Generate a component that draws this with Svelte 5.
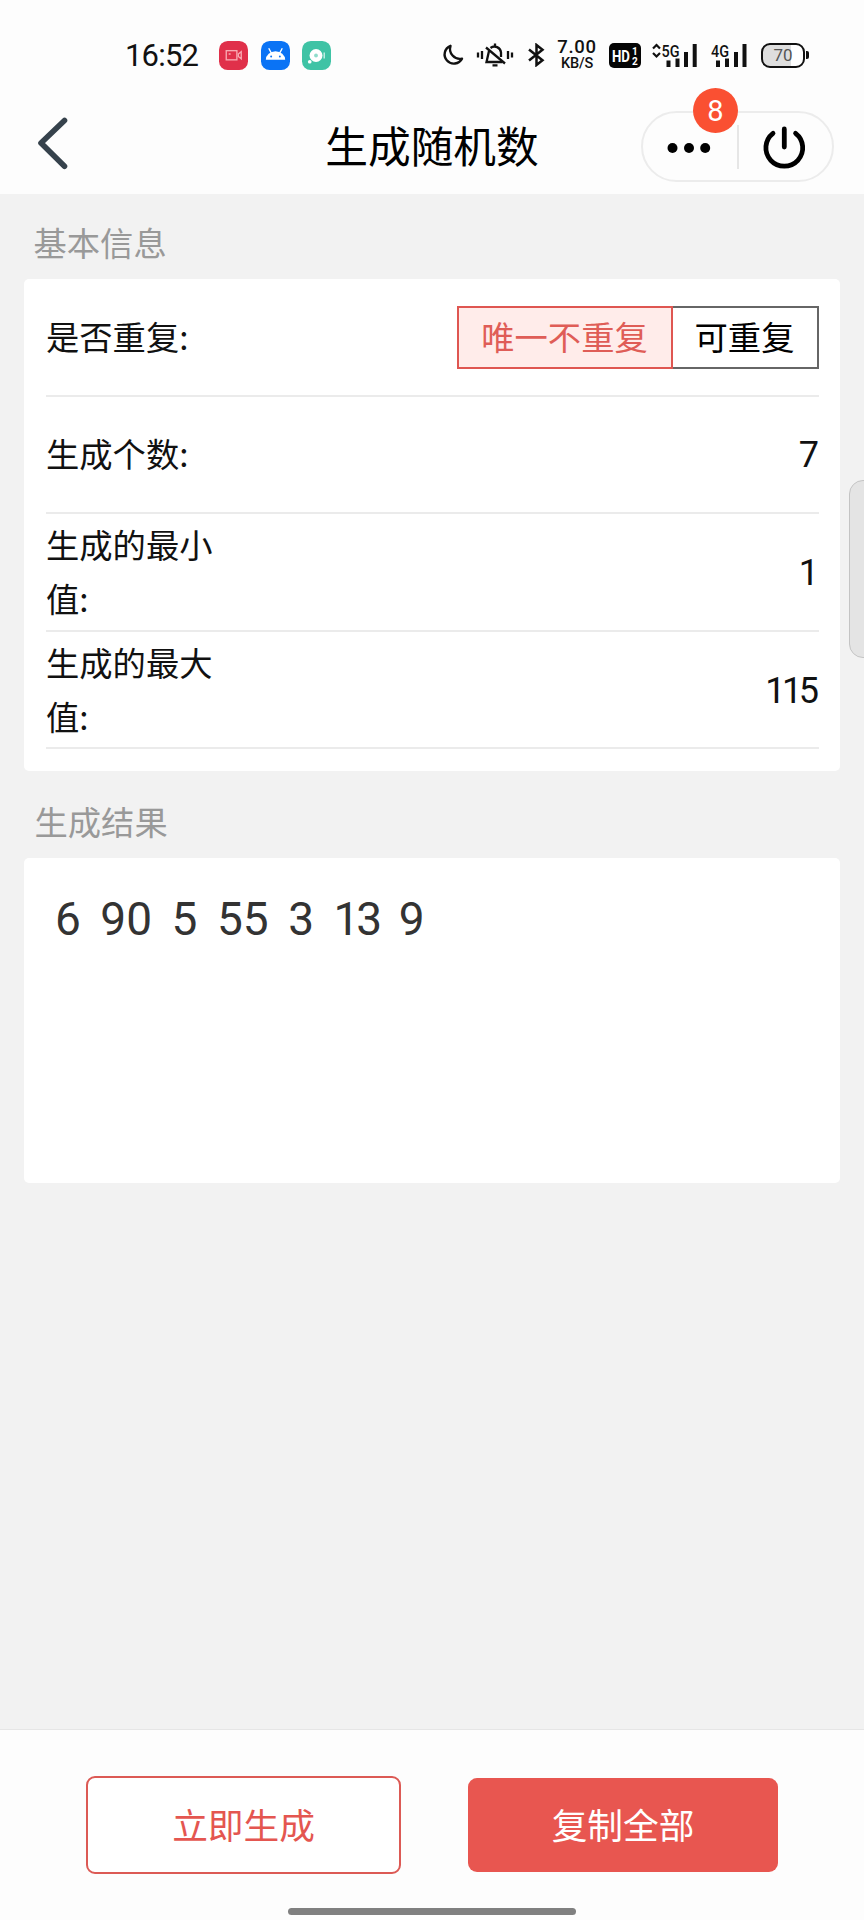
<script>
  let unique = $state(true);

  const fields = [
    { label: "生成个数:", value: "7" },
    { label: "生成的最小值:", value: "1" },
    { label: "生成的最大值:", value: "115" },
  ];

  const results = [6, 90, 5, 55, 3, 13, 9];
</script>

<div class="screen">
  <div class="status-bar">
    <span class="time">16:52</span>

    <div class="apps">
      <svg width="29" height="29" viewBox="0 0 30 30">
        <rect width="30" height="30" rx="9" fill="#e0304a" />
        <g fill="none" stroke="#f8a9b2" stroke-width="1.4">
          <rect x="7.5" y="10" width="11" height="9.5" />
          <path d="M20 13.5l3-2.5v7.5l-3-2.5zM10 13.5h2" />
        </g>
      </svg>
      <svg width="29" height="29" viewBox="0 0 30 30">
        <rect width="30" height="30" rx="9" fill="#0a73f5" />
        <path d="M5 19.5a10 9 0 0 1 20 0z" fill="#fff" />
        <path d="M8 7.5l3 5.5M22 7.5l-3 5.5" stroke="#fff" stroke-width="1.4" />
        <circle cx="10.5" cy="16" r="1" fill="#0a73f5" />
        <circle cx="19.5" cy="16" r="1" fill="#0a73f5" />
      </svg>
      <svg width="29" height="29" viewBox="0 0 30 30">
        <rect width="30" height="30" rx="9" fill="#3fc3a5" />
        <circle cx="14.5" cy="15" r="6.7" fill="#fff" />
        <circle cx="14.5" cy="15" r="2" fill="#8fdccb" />
        <circle cx="8" cy="21.5" r="1.9" fill="#fff" />
        <path d="M23 12v6" stroke="#c5eee5" stroke-width="1.5" />
      </svg>
    </div>

    <div class="system">
      <svg class="moon" width="22" height="22" viewBox="0 0 22 22">
        <path
          d="M8.5 1.8A9.2 9.2 0 1 0 20 14.6A10 10 0 0 1 8.5 1.8z"
          fill="none"
          stroke="#111"
          stroke-width="2.4"
          stroke-linejoin="round"
        />
      </svg>
      <svg class="bell" width="38" height="24" viewBox="0 0 38 24">
        <g fill="none" stroke="#111" stroke-width="2.3">
          <path d="M2 9.5v5M6 8v8M32 8v8M36 9.5v5" />
          <path d="M13 8L10.5 19h16M14.5 5a6.5 6.5 0 0 1 10.5 4.5V14M19 .5v3M16.5 22.3h5" />
          <path d="M10 4.5L29 20.5" />
        </g>
      </svg>
      <svg class="bluetooth" width="18" height="24" viewBox="0 0 18 24">
        <path
          d="M2 6.5L15.5 17.2L9.5 22V2l6 4.8L2 17.5"
          fill="none"
          stroke="#111"
          stroke-width="2.5"
        />
      </svg>
      <div class="speed">
        <span>7.00</span>
        <small>KB/S</small>
      </div>
      <svg class="hd" width="32" height="25" viewBox="0 0 32 25">
        <rect width="32" height="25" rx="5" fill="#050505" />
        <text x="3" y="18.5" textLength="18" lengthAdjust="spacingAndGlyphs">HD</text>
        <text class="sim" x="23" y="11.5">1</text>
        <text class="sim" x="23" y="21.5">2</text>
      </svg>
      <svg class="signal-5g" width="46" height="26" viewBox="0 0 46 26">
        <path d="M1 6.5L4.5 3L8 6.5M1 11l3.5 3.5L8 11" fill="none" stroke="#111" stroke-width="2.2" />
        <text x="9.5" y="14.5" textLength="18" lengthAdjust="spacingAndGlyphs">5G</text>
        <path d="M16.5 18.5V25M25.5 16.5V25M34 10V25M42.7 2V25" stroke="#111" stroke-width="4" />
      </svg>
      <svg class="signal-4g" width="37" height="26" viewBox="0 0 37 26">
        <text x="0" y="14.5" textLength="18" lengthAdjust="spacingAndGlyphs">4G</text>
        <path d="M7 18.5V25M16 16.5V25M25 10V25M33.5 2V25" stroke="#111" stroke-width="4" />
      </svg>
      <div class="battery">70</div>
    </div>
  </div>

  <header class="nav">
    <svg class="back" width="34" height="56" viewBox="0 0 34 56">
      <path
        d="M28.5 5.5L5 28l23.5 23.3"
        fill="none"
        stroke="#36424c"
        stroke-width="5.6"
        stroke-linecap="round"
        stroke-linejoin="round"
      />
    </svg>
    <h1>生成随机数</h1>
    <div class="capsule">
      <svg class="more" width="44" height="12" viewBox="0 0 44 12">
        <circle cx="5.5" cy="6" r="5" />
        <circle cx="22" cy="6" r="5" />
        <circle cx="38.2" cy="6" r="5" />
      </svg>
      <span class="line"></span>
      <svg class="power" width="44" height="44" viewBox="0 0 44 44">
        <path
          d="M11 8.3A18.4 18.4 0 1 0 33.6 8.3M22.3 4v18"
          fill="none"
          stroke="#000"
          stroke-width="4.8"
          stroke-linecap="round"
        />
      </svg>
      <span class="badge">8</span>
    </div>
  </header>

  <main>
    <h2>基本信息</h2>
    <section class="card info">
      <div class="row">
        <span class="label">是否重复:</span>
        <div class="segment">
          <button class:active={unique} onclick={() => (unique = true)}>唯一不重复</button>
          <button class:active={!unique} onclick={() => (unique = false)}>可重复</button>
        </div>
      </div>
      {#each fields as field}
        <div class="row">
          <span class="label">{field.label}</span>
          <span class="value">{field.value}</span>
        </div>
      {/each}
    </section>

    <h2 class="second">生成结果</h2>
    <section class="card result">
      {#each results as n}
        <span class:narrow={String(n).includes("1")}>{n}</span>
      {/each}
    </section>
  </main>

  <footer>
    <div class="actions">
      <button class="generate">立即生成</button>
      <button class="copy">复制全部</button>
    </div>
    <div class="home-bar"></div>
  </footer>

  <div class="side-handle"></div>
</div>

<style>
  :global(body) {
    margin: 0;
    background: #f2f2f2;
  }

  .screen {
    position: relative;
    display: flex;
    flex-direction: column;
    width: 864px;
    height: 1920px;
    overflow: hidden;
    background: #f2f2f2;
    color: #111;
    font-family: Roboto, "Noto Sans CJK SC", sans-serif;
  }

  .screen * {
    box-sizing: border-box;
  }

  svg {
    display: block;
    flex: none;
  }

  button {
    margin: 0;
    padding: 0;
    border-radius: 0;
    background: none;
    font-family: "Noto Sans CJK SC", sans-serif;
    white-space: nowrap;
  }

  .status-bar {
    display: flex;
    align-items: center;
    height: 110px;
    padding: 0 56px 0 125px;
    background: #fdfdfd;
    flex: none;
  }

  .time {
    width: 94px;
    padding-top: 1px;
    font-size: 31px;
    line-height: 36px;
    letter-spacing: -0.8px;
    white-space: nowrap;
  }

  .apps {
    display: flex;
    gap: 12.5px;
  }

  .system {
    display: flex;
    align-items: center;
    margin-left: auto;
  }

  .bell {
    margin-left: 12px;
  }

  .bluetooth {
    margin-left: 13px;
  }

  .speed {
    display: flex;
    flex-direction: column;
    align-items: center;
    width: 40px;
    margin-left: 12px;
    font-weight: 500;
    font-size: 18.5px;
    line-height: 17px;
    letter-spacing: 0.7px;
  }

  .speed small {
    font-size: 14.5px;
    line-height: 15px;
    letter-spacing: -0.2px;
  }

  .hd {
    margin-left: 12px;
  }

  .signal-5g {
    margin-left: 11px;
  }

  .signal-4g {
    margin-left: 13px;
  }

  text {
    font-family: Roboto, sans-serif;
    font-size: 17px;
    font-weight: 500;
    fill: #111;
  }

  .hd text {
    fill: #fff;
    font-weight: 700;
  }

  .hd .sim {
    font-size: 10px;
  }

  .battery {
    position: relative;
    width: 44px;
    height: 25px;
    margin: 0 3px 0 13px;
    border: 2.5px solid #111;
    border-radius: 9px;
    background: linear-gradient(to right, #dedede 70%, #fff 70%);
    color: #555;
    font-size: 17px;
    line-height: 20px;
    text-align: center;
  }

  .battery::after {
    content: "";
    position: absolute;
    top: 6px;
    right: -6px;
    width: 3px;
    height: 8px;
    background: #111;
    border-radius: 0 2px 2px 0;
  }

  .nav {
    display: grid;
    grid-template-columns: 1fr auto 1fr;
    align-items: center;
    height: 84px;
    padding: 0 30px 11px 36px;
    background: #fdfdfd;
    flex: none;
  }

  .back {
    margin-top: -7px;
  }

  h1 {
    margin: -6px 6px 0 0;
    color: #000;
    font-size: 42.7px;
    line-height: 60px;
    font-weight: 400;
    font-family: "Noto Sans CJK SC", sans-serif;
  }

  .capsule {
    position: relative;
    display: flex;
    align-items: center;
    justify-self: end;
    width: 193px;
    height: 71px;
    padding-left: 24px;
    border: 2px solid #ececec;
    border-radius: 36px;
  }

  .more {
    margin-top: 2px;
  }

  .line {
    width: 2px;
    height: 44px;
    margin-left: 26px;
    background: #e6e6e6;
  }

  .power {
    margin-left: 23px;
  }

  .badge {
    position: absolute;
    top: -25px;
    left: 50px;
    width: 45px;
    height: 45px;
    border-radius: 50%;
    background: #fa5032;
    color: #fff;
    font-size: 29px;
    line-height: 46px;
    text-align: center;
  }

  main {
    flex: 1;
    padding: 0 24px;
  }

  h2 {
    display: flex;
    align-items: center;
    height: 85px;
    margin: 0;
    padding: 10px 0 0 9.5px;
    color: #999;
    font-family: "Noto Sans CJK SC", sans-serif;
    font-size: 33.3px;
    line-height: 54px;
    font-weight: 400;
  }

  .second {
    height: 87px;
    padding-top: 13px;
    padding-left: 10.5px;
  }

  .card {
    border-radius: 5px;
    background: #fff;
  }

  .info {
    height: 492px;
    padding: 0 21.5px 0 22px;
  }

  .row {
    display: flex;
    align-items: center;
    justify-content: space-between;
    height: 117.6px;
    border-bottom: 2px solid #ebebeb;
  }

  .label {
    width: 180px;
    margin-top: -2px;
    font-family: "Noto Sans CJK SC", sans-serif;
    font-size: 33.3px;
    line-height: 54px;
  }

  .value {
    margin: 2px 3px 0 0;
    color: #111;
    font-size: 36px;
    line-height: 44px;
    letter-spacing: -3.5px;
  }

  .segment {
    display: flex;
    height: 63px;
    margin-top: 1px;
  }

  .segment button {
    width: 146px;
    padding-bottom: 2px;
    border: 2px solid #666;
    border-left: 0;
    color: #000;
    font-size: 33.3px;
    line-height: 54px;
  }

  .segment button.active {
    width: 216px;
    border: 2px solid #df5651;
    background: #ffecea;
    color: #df5d57;
  }

  .result {
    display: flex;
    gap: 19.5px;
    height: 325px;
    padding: 33px 32px 32px 31px;
    color: #333;
    font-size: 46px;
    line-height: 56px;
  }

  .narrow {
    letter-spacing: -3px;
  }

  footer {
    display: flex;
    flex-direction: column;
    height: 191px;
    border-top: 1px solid #e6e6e6;
    background: #fdfdfd;
    flex: none;
  }

  .actions {
    display: flex;
    align-items: center;
    height: 98px;
    margin-top: 46px;
    padding-left: 86px;
    gap: 67px;
  }

  .actions button {
    width: 310px;
    height: 94px;
    padding-bottom: 3px;
    border: 0;
    border-radius: 9px;
    font-size: 35.7px;
  }

  .actions .generate {
    width: 315px;
    height: 98px;
    border: 2px solid #dc5a55;
    color: #e45650;
    background: #fff;
  }

  .actions .copy {
    background: #e85650;
    color: #fff;
  }

  .home-bar {
    width: 288px;
    height: 7px;
    margin: 34px auto 0;
    border-radius: 4px;
    background: #808080;
  }

  .side-handle {
    position: absolute;
    top: 480px;
    right: -2px;
    width: 17px;
    height: 178px;
    border: 1px solid #c4c4c4;
    border-radius: 14px 0 0 14px;
    background: #e4e4e4;
  }
</style>
